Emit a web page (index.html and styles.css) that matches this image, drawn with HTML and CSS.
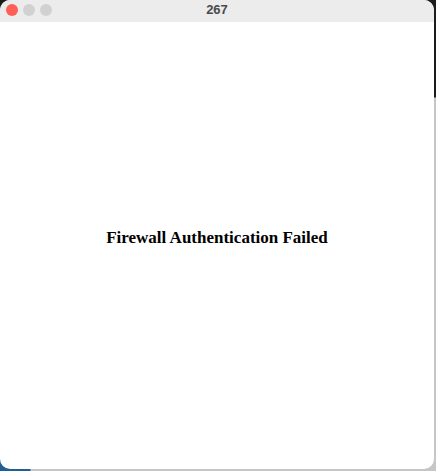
FILE: index.html
```html
<!DOCTYPE html>
<html>
<head>
<meta charset="utf-8">
<link rel="stylesheet" href="styles.css">
</head>
<body>
<div class="window">
  <div class="titlebar">
    <div class="lights">
      <span class="light red"></span>
      <span class="light gray"></span>
      <span class="light gray"></span>
    </div>
    <div class="title">267</div>
  </div>
  <div class="content">
    <h1 class="message">Firewall Authentication Failed</h1>
  </div>
</div>
</body>
</html>
```
FILE: styles.css
```css
html, body {
  margin: 0;
  padding: 0;
  width: 436px;
  height: 471px;
  overflow: hidden;
}
body {
  background:
    radial-gradient(circle at 0 471px, #1f5f93 0, #1f5f93 30px, transparent 31px),
    linear-gradient(to bottom, #1c1c1c 0, #1c1c1c 97px, #c6c6c6 98px, #c6c6c6 100%);
}
.window {
  width: 434px;
  height: 469px;
  background: #ffffff;
  border-radius: 10px;
  overflow: hidden;
  display: flex;
  flex-direction: column;
}
.titlebar {
  height: 22px;
  background: #ececec;
  position: relative;
  display: flex;
  align-items: center;
  justify-content: center;
  flex-shrink: 0;
}
.lights {
  position: absolute;
  left: 6px;
  top: 4px;
  display: flex;
  gap: 5px;
}
.light {
  width: 12px;
  height: 12px;
  border-radius: 50%;
  display: block;
}
.red { background: #fe5f57; }
.gray { background: #d1d1d1; }
.title {
  font-family: "Liberation Sans", Arial, sans-serif;
  font-weight: bold;
  font-size: 13px;
  color: #4a4a4a;
  margin-top: -3px;
}
.content {
  flex: 1;
  display: flex;
  align-items: center;
  justify-content: center;
  padding-bottom: 16px;
}
.message {
  margin: 0;
  font-family: "Liberation Serif", "Times New Roman", serif;
  font-weight: bold;
  font-size: 17px;
  color: #000;
}
```
